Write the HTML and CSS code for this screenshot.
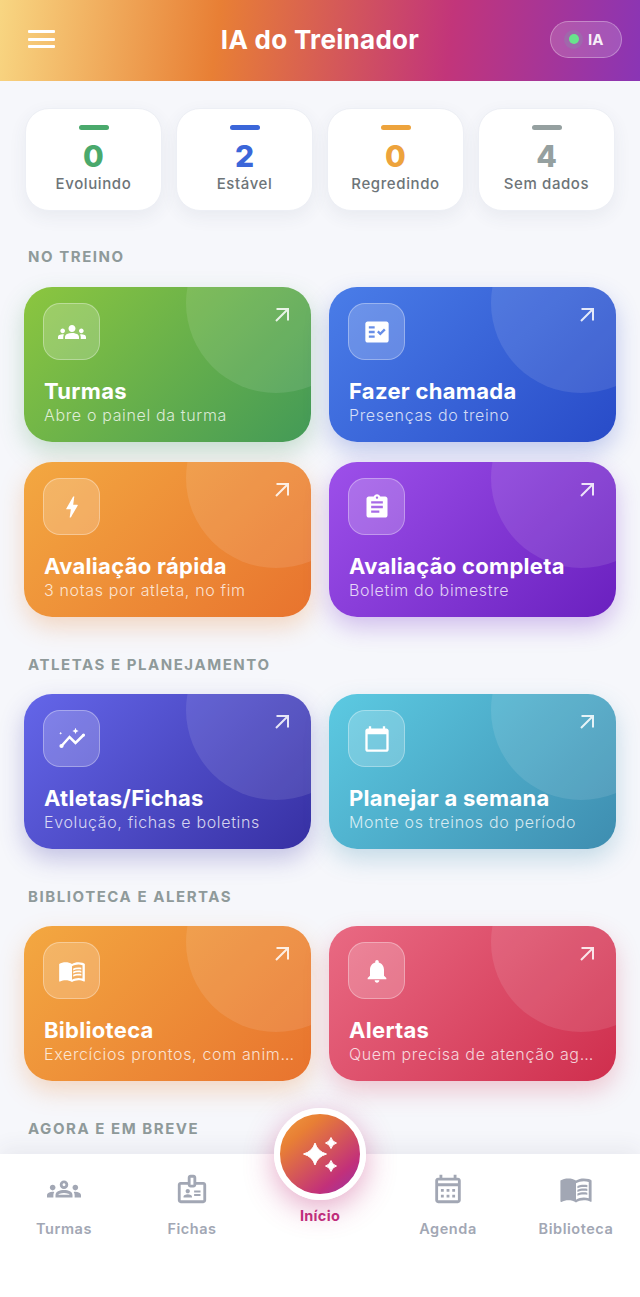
FILE: index.html
```html
<!DOCTYPE html>
<html lang="pt-BR">
<head>
<meta charset="utf-8">
<title>IA do Treinador</title>
<link rel="stylesheet" href="styles.css">
</head>
<body>
<div class="app">
  <header class="topbar">
    <button class="menu" aria-label="Menu"><span></span><span></span><span></span></button>
    <h1 class="brand">IA do Treinador</h1>
    <div class="pill"><span class="halo"><span class="dot"></span></span><span class="pill-text">IA</span></div>
  </header>

  <main class="content">
    <section class="stats">
      <div class="stat green"><i class="bar"></i><b class="num">0</b><span class="lbl">Evoluindo</span></div>
      <div class="stat blue"><i class="bar"></i><b class="num">2</b><span class="lbl">Estável</span></div>
      <div class="stat orange"><i class="bar"></i><b class="num">0</b><span class="lbl">Regredindo</span></div>
      <div class="stat gray"><i class="bar"></i><b class="num">4</b><span class="lbl">Sem dados</span></div>
    </section>

    <h2 class="section">NO TREINO</h2>
    <div class="grid">
      <a class="card c-green">
        <svg class="arrow" viewBox="0 0 16 16"><path d="M3 15 14.5 3.5M3.500 3H15V14.500"/></svg>
        <span class="ico"><svg viewBox="0 0 24 24"><path d="M12 12.750c1.630 0 3.070.390 4.240.900 1.080.480 1.760 1.560 1.760 2.730V18H6v-1.610c0-1.180.680-2.260 1.760-2.730 1.170-.520 2.610-.910 4.240-.910zM4 13c1.100 0 2-.900 2-2s-.900-2-2-2-2 .900-2 2 .900 2 2 2zm1.130 1.100c-.370-.060-.740-.100-1.130-.100-.990 0-1.930.210-2.780.580C.480 14.900 0 15.620 0 16.430V18h4.500v-1.610c0-.830.230-1.610.630-2.290zM20 13c1.100 0 2-.900 2-2s-.900-2-2-2-2 .900-2 2 .900 2 2 2zm4 3.430c0-.810-.480-1.530-1.220-1.850-.850-.370-1.790-.580-2.780-.580-.390 0-.760.040-1.130.100.400.680.630 1.460.630 2.290V18H24v-1.570zM12 6c1.660 0 3 1.340 3 3s-1.340 3-3 3-3-1.340-3-3 1.340-3 3-3z"/></svg></span>
        <strong class="title">Turmas</strong>
        <span class="sub">Abre o painel da turma</span>
      </a>
      <a class="card c-blue">
        <svg class="arrow" viewBox="0 0 16 16"><path d="M3 15 14.5 3.5M3.500 3H15V14.500"/></svg>
        <span class="ico"><svg viewBox="0 0 24 24"><path fill-rule="evenodd" d="M20 3H4c-1.100 0-2 .900-2 2v14c0 1.100.900 2 2 2h16c1.100 0 2-.900 2-2V5c0-1.100-.900-2-2-2zM10 17H5v-2h5v2zm0-4H5v-2h5v2zm0-4H5V7h5v2zm4.820 6L12 12.160l1.410-1.410 1.410 1.420L17.990 9l1.420 1.420L14.820 15z"/></svg></span>
        <strong class="title">Fazer chamada</strong>
        <span class="sub">Presenças do treino</span>
      </a>
      <a class="card c-orange">
        <svg class="arrow" viewBox="0 0 16 16"><path d="M3 15 14.5 3.5M3.500 3H15V14.500"/></svg>
        <span class="ico"><svg viewBox="0 0 24 24"><path d="M11 21h-1l1-7H7.500c-.580 0-.570-.320-.380-.660.190-.340.050-.080.070-.120C8.480 10.940 10.420 7.540 13 3h1l-1 7h3.500c.490 0 .560.330.470.510l-.070.150C12.960 17.550 11 21 11 21z"/></svg></span>
        <strong class="title">Avaliação rápida</strong>
        <span class="sub">3 notas por atleta, no fim</span>
      </a>
      <a class="card c-purple">
        <svg class="arrow" viewBox="0 0 16 16"><path d="M3 15 14.5 3.5M3.500 3H15V14.500"/></svg>
        <span class="ico"><svg viewBox="0 0 24 24"><path fill-rule="evenodd" d="M19 3h-4.180C14.400 1.840 13.300 1 12 1c-1.300 0-2.400.840-2.820 2H5c-1.100 0-2 .900-2 2v14c0 1.100.900 2 2 2h14c1.100 0 2-.900 2-2V5c0-1.100-.900-2-2-2zm-7 0c.550 0 1 .450 1 1s-.450 1-1 1-1-.450-1-1 .450-1 1-1zm2 14H7v-2h7v2zm3-4H7v-2h10v2zm0-4H7V7h10v2z"/></svg></span>
        <strong class="title">Avaliação completa</strong>
        <span class="sub">Boletim do bimestre</span>
      </a>
    </div>

    <h2 class="section">ATLETAS E PLANEJAMENTO</h2>
    <div class="grid">
      <a class="card c-indigo">
        <svg class="arrow" viewBox="0 0 16 16"><path d="M3 15 14.5 3.5M3.500 3H15V14.500"/></svg>
        <span class="ico"><svg viewBox="0 0 24 24"><path d="M15 2.400l.8 1.900 1.900.8-1.900.8-.8 1.900-.8-1.900-1.900-.8 1.900-.8zM2.300 5.800l.35.900.9.35-.9.35-.35.900-.35-.900-.9-.35.9-.35z"/><path class="ln" d="M3 18 9.900 10.300l5.100 5.100 6.900-6.800"/><circle cx="3" cy="18" r="1.800"/><circle cx="21.900" cy="8.600" r="1.300"/></svg></span>
        <strong class="title">Atletas/Fichas</strong>
        <span class="sub">Evolução, fichas e boletins</span>
      </a>
      <a class="card c-teal">
        <svg class="arrow" viewBox="0 0 16 16"><path d="M3 15 14.5 3.5M3.500 3H15V14.500"/></svg>
        <span class="ico"><svg viewBox="0 0 24 24"><path fill-rule="evenodd" d="M20 3h-1V1h-2v2H7V1H5v2H4c-1.100 0-2 .900-2 2v16c0 1.100.900 2 2 2h16c1.100 0 2-.900 2-2V5c0-1.100-.900-2-2-2zm0 18H4V8h16v13z"/></svg></span>
        <strong class="title">Planejar a semana</strong>
        <span class="sub">Monte os treinos do período</span>
      </a>
    </div>

    <h2 class="section">BIBLIOTECA E ALERTAS</h2>
    <div class="grid">
      <a class="card c-orange">
        <svg class="arrow" viewBox="0 0 16 16"><path d="M3 15 14.5 3.5M3.500 3H15V14.500"/></svg>
        <span class="ico"><svg viewBox="0 0 24 24"><path fill-rule="evenodd" d="M21 5c-1.110-.350-2.330-.500-3.500-.500-1.950 0-4.050.400-5.500 1.500-1.450-1.100-3.550-1.500-5.500-1.500S2.450 4.900 1 6v14.650c0 .250.250.500.500.500.100 0 .150-.050.250-.050C3.100 20.450 5.050 20 6.500 20c1.950 0 4.050.400 5.500 1.500 1.350-.850 3.800-1.500 5.500-1.500 1.650 0 3.350.300 4.750 1.050.100.050.150.050.250.050.250 0 .500-.250.500-.500V6c-.600-.450-1.250-.750-2-1zm0 13.500c-1.100-.350-2.300-.500-3.500-.500-1.700 0-4.150.650-5.500 1.500V8c1.350-.850 3.800-1.500 5.500-1.500 1.200 0 2.400.150 3.500.500v11.500z"/><path d="M17.500 10.500c.880 0 1.730.090 2.500.260V9.240c-.790-.150-1.640-.240-2.500-.240-1.700 0-3.240.290-4.500.830v1.660c1.130-.640 2.700-.990 4.500-.990zM13 12.490v1.660c1.130-.640 2.700-.990 4.500-.990.880 0 1.730.090 2.500.260V11.900c-.790-.150-1.640-.240-2.500-.240-1.700 0-3.240.300-4.500.830zM17.500 14.330c-1.700 0-3.240.290-4.500.830v1.660c1.130-.640 2.700-.990 4.500-.990.880 0 1.730.090 2.500.260v-1.520c-.790-.160-1.640-.240-2.500-.240z"/></svg></span>
        <strong class="title">Biblioteca</strong>
        <span class="sub">Exercícios prontos, com animações</span>
      </a>
      <a class="card c-red">
        <svg class="arrow" viewBox="0 0 16 16"><path d="M3 15 14.5 3.5M3.500 3H15V14.500"/></svg>
        <span class="ico"><svg viewBox="0 0 24 24"><path d="M12 22c1.100 0 2-.900 2-2h-4c0 1.100.890 2 2 2zm6-6v-5c0-3.070-1.640-5.640-4.500-6.320V4c0-.830-.670-1.500-1.500-1.500s-1.500.670-1.500 1.500v.680C7.630 5.360 6 7.920 6 11v5l-2 2v1h16v-1l-2-2z"/></svg></span>
        <strong class="title">Alertas</strong>
        <span class="sub">Quem precisa de atenção agora</span>
      </a>
    </div>

    <h2 class="section">AGORA E EM BREVE</h2>
  </main>

  <nav class="tabbar">
    <a class="tab"><svg viewBox="0 0 24 24"><path fill-rule="evenodd" d="M4 13c1.100 0 2-.900 2-2s-.900-2-2-2-2 .900-2 2 .900 2 2 2zm1.130 1.100c-.370-.060-.740-.100-1.130-.100-.990 0-1.930.210-2.780.580C.480 14.900 0 15.620 0 16.430V18h4.500v-1.610c0-.830.230-1.610.630-2.290zM20 13c1.100 0 2-.900 2-2s-.900-2-2-2-2 .900-2 2 .900 2 2 2zm4 3.430c0-.810-.480-1.530-1.220-1.850-.850-.370-1.790-.580-2.780-.580-.390 0-.760.040-1.130.100.400.680.630 1.460.630 2.290V18H24v-1.570zm-7.760-2.780c-1.170-.520-2.610-.900-4.240-.900-1.630 0-3.070.390-4.240.900C6.680 14.130 6 15.210 6 16.390V18h12v-1.610c0-1.180-.680-2.260-1.760-2.740zM8.070 16c.090-.230.130-.390.910-.690.970-.380 1.990-.560 3.020-.560s2.050.180 3.020.560c.770.300.810.460.910.690H8.070zM12 8c.550 0 1 .450 1 1s-.450 1-1 1-1-.450-1-1 .450-1 1-1m0-2c-1.660 0-3 1.340-3 3s1.340 3 3 3 3-1.340 3-3-1.340-3-3-3z"/></svg><span>Turmas</span></a>
    <a class="tab"><svg viewBox="0 0 24 24"><path fill-rule="evenodd" d="M20 7h-5V4c0-1.100-.900-2-2-2h-2C9.900 2 9 2.900 9 4v3H4C2.900 7 2 7.900 2 9v11c0 1.100.900 2 2 2h16c1.100 0 2-.900 2-2V9C22 7.900 21.100 7 20 7zM11 4h2v5h-2V4zM20 20H4V9h5c0 1.100.900 2 2 2h2c1.100 0 2-.900 2-2h5V20z"/><path d="M9 15c.830 0 1.500-.670 1.500-1.500S9.830 12 9 12s-1.500.670-1.500 1.500S8.170 15 9 15zM11.080 16.180C10.440 15.900 9.740 15.750 9 15.750s-1.440.150-2.080.430C6.360 16.420 6 16.960 6 17.570V18h6v-.430c0-.610-.360-1.150-.920-1.390zM13.500 13H18v1.500h-4.500zM13.500 15.500H18V17h-4.500z"/></svg><span>Fichas</span></a>
    <a class="tab home">
      <span class="fab"><svg viewBox="0 0 80 80"><path d="M35 29Q37.500 37.500 46.500 40 37.500 42.500 35 51 32.500 42.500 23.500 40 32.500 37.500 35 29ZM51 23.500Q52.200 27.800 56.500 29 52.200 30.200 51 34.500 49.800 30.200 45.500 29 49.800 27.800 51 23.500ZM51 46.500Q52.200 50.800 56.500 52 52.200 53.200 51 57.500 49.800 53.200 45.500 52 49.800 50.800 51 46.500Z"/></svg></span>
      <span>Início</span>
    </a>
    <a class="tab"><svg viewBox="0 0 24 24"><path fill-rule="evenodd" d="M19 4h-1V2h-2v2H8V2H6v2H5c-1.100 0-2 .900-2 2v14c0 1.100.900 2 2 2h14c1.100 0 2-.900 2-2V6c0-1.100-.900-2-2-2zm0 16H5V10h14v10zm0-12H5V6h14v2zM9 14H7v-2h2v2zm4 0h-2v-2h2v2zm4 0h-2v-2h2v2zm-8 4H7v-2h2v2zm4 0h-2v-2h2v2zm4 0h-2v-2h2v2z"/></svg><span>Agenda</span></a>
    <a class="tab"><svg viewBox="0 0 24 24"><path fill-rule="evenodd" d="M21 5c-1.110-.350-2.330-.500-3.500-.500-1.950 0-4.050.400-5.500 1.500-1.450-1.100-3.550-1.500-5.500-1.500S2.450 4.900 1 6v14.650c0 .250.250.500.500.500.100 0 .150-.050.250-.050C3.100 20.450 5.050 20 6.500 20c1.950 0 4.050.400 5.500 1.500 1.350-.850 3.800-1.500 5.500-1.500 1.650 0 3.350.300 4.750 1.050.100.050.150.050.250.050.250 0 .500-.250.500-.500V6c-.600-.450-1.250-.750-2-1zm0 13.500c-1.100-.350-2.300-.500-3.500-.500-1.700 0-4.150.650-5.500 1.500V8c1.350-.850 3.800-1.500 5.500-1.500 1.200 0 2.400.150 3.500.500v11.500z"/><path d="M17.500 10.500c.880 0 1.730.090 2.500.260V9.240c-.790-.150-1.640-.240-2.500-.240-1.700 0-3.240.290-4.500.830v1.660c1.130-.640 2.700-.990 4.500-.990zM13 12.490v1.660c1.130-.640 2.700-.990 4.500-.990.880 0 1.730.090 2.500.260V11.900c-.790-.150-1.640-.240-2.500-.240-1.700 0-3.240.300-4.500.830zM17.500 14.330c-1.700 0-3.240.290-4.500.830v1.660c1.130-.640 2.700-.990 4.500-.990.880 0 1.730.090 2.500.260v-1.520c-.790-.160-1.640-.240-2.500-.240z"/></svg><span>Biblioteca</span></a>
  </nav>
</div>
</body>
</html>
```

FILE: styles.css
```css
* { box-sizing: border-box; }
html, body { margin: 0; padding: 0; height: 100%; }
body { font-family: Inter, "Noto Sans", "Liberation Sans", sans-serif; background: #f6f7fb; overflow: hidden; }

.app { height: 1297px; display: flex; flex-direction: column; overflow: hidden; position: relative; }

.topbar {
  height: 81px; flex: none; position: relative;
  display: flex; align-items: center; justify-content: space-between;
  padding: 0 18px 3px 28px;
  background: linear-gradient(97deg, #f8d682 0%, #e87f35 34%, #c2357a 70%, #8a35b5 100%);
}
.menu { width: 27px; height: 18px; padding: 0; border: 0; background: none; display: flex; flex-direction: column; justify-content: space-between; }
.menu span { display: block; height: 3px; background: #fff; border-radius: 1px; }
.brand { position: absolute; left: 0; right: 0; top: 25px; margin: 0; text-align: center; color: #fff; font-size: 26px; line-height: 30px; font-weight: 700; letter-spacing: .3px; }
.pill { width: 72px; height: 37px; border-radius: 19px; display: flex; align-items: center; gap: 5px; padding-left: 13px; background: rgba(255,255,255,.16); border: 1.500px solid rgba(255,255,255,.3); }
.halo { width: 19px; height: 19px; border-radius: 50%; background: rgba(140,130,170,.4); display: flex; align-items: center; justify-content: center; }
.dot { width: 10px; height: 10px; border-radius: 50%; background: #68e58c; }
.pill-text { color: rgba(255,255,255,.92); font-size: 15px; font-weight: 700; }

.content { flex: 1; min-height: 0; padding: 27px 24px 0; overflow: hidden; }

.stats { display: grid; grid-template-columns: repeat(4, 1fr); gap: 14px; margin: 0 1px; }
.stat {
  height: 103px; background: #fff; border: 1px solid #edeff5; border-radius: 24px;
  display: flex; flex-direction: column; align-items: center; padding-top: 16px;
  box-shadow: 0 6px 18px rgba(60,70,100,.07);
}
.bar { display: block; width: 30px; height: 5px; border-radius: 3px; background: currentColor; }
.num { font-size: 30px; line-height: 36px; font-weight: 800; margin-top: 8px; }
.lbl { font-size: 15px; line-height: 20px; font-weight: 500; letter-spacing: .6px; color: #6d7478; margin-top: 0; }
.green { color: #4aa96c; }
.blue { color: #3b66d9; }
.orange { color: #eda33c; }
.gray { color: #95a0a0; }

.section { margin: 35px 0 19px; padding-left: 4px; font-size: 15px; line-height: 22px; font-weight: 700; letter-spacing: 1.550px; color: #8f9a9a; }
.grid + .section { margin-top: 37px; margin-bottom: 18px; }

.grid { display: grid; grid-template-columns: 287px 287px; column-gap: 18px; row-gap: 20px; }

.card {
  position: relative; height: 155px; border-radius: 28px; overflow: hidden;
  display: flex; flex-direction: column; padding: 16px 16px 17px 19px; color: #fff;
}
.card::before {
  content: ""; position: absolute; width: 180px; height: 180px; right: -55px; top: -74px;
  border-radius: 50%; background: rgba(255,255,255,.1);
}
.c-green { background: linear-gradient(135deg, #8cc63f, #439a57); box-shadow: 0 10px 24px rgba(70,150,90,.28); }
.c-blue { background: linear-gradient(135deg, #4a7de8, #284bc8); box-shadow: 0 10px 24px rgba(50,80,200,.28); }
.c-orange { background: linear-gradient(135deg, #f3a841, #e8732e); box-shadow: 0 10px 24px rgba(235,130,50,.28); }
.c-purple { background: linear-gradient(135deg, #9d50ea, #6a20bf); box-shadow: 0 10px 24px rgba(110,40,200,.28); }
.c-indigo { background: linear-gradient(135deg, #6466e9, #3730a3); box-shadow: 0 10px 24px rgba(60,55,170,.28); }
.c-teal { background: linear-gradient(135deg, #5ccae2, #3e8db0); box-shadow: 0 10px 24px rgba(65,145,180,.28); }
.c-red { background: linear-gradient(135deg, #e96a83, #cf2e4d); box-shadow: 0 10px 24px rgba(210,50,85,.25); }

.arrow { position: absolute; top: 19px; right: 22px; width: 16px; height: 16px; fill: none; stroke: rgba(255,255,255,.85); stroke-width: 2; }

.ico {
  width: 57px; height: 57px; flex: none; position: relative; border-radius: 17px;
  background: rgba(255,255,255,.2); border: 1px solid rgba(255,255,255,.32);
  display: flex; align-items: center; justify-content: center;
}
.ico svg { width: 28px; height: 28px; fill: #fff; }
.ico .ln { fill: none; stroke: #fff; stroke-width: 2.200; }

.title { position: relative; margin: auto 0 0 1px; font-size: 22px; line-height: 28px; font-weight: 700; letter-spacing: .3px; white-space: nowrap; }
.sub { position: relative; margin-left: 1px; font-size: 16px; line-height: 20px; font-weight: 300; letter-spacing: .65px; color: rgba(255,255,255,.78); white-space: nowrap; overflow: hidden; text-overflow: ellipsis; }

.tabbar {
  height: 143px; flex: none; position: relative; background: #fff;
  display: grid; grid-template-columns: repeat(5, 1fr);
  box-shadow: 0 -6px 20px rgba(50,55,80,.07);
}
.tab { display: flex; flex-direction: column; align-items: center; padding-top: 18px; color: #a2a7b4; font-size: 14.500px; line-height: 20px; font-weight: 600; letter-spacing: .55px; }
.tab svg { width: 34px; height: 34px; fill: #a2a7b4; margin-bottom: 13px; }
.home { color: #bf2e7c; font-weight: 700; position: relative; padding-top: 52px; letter-spacing: .3px; }
.fab {
  position: absolute; left: 18px; top: -46px; width: 92px; height: 92px; border-radius: 50%;
  border: 6px solid #fff; background: linear-gradient(140deg, #f2a440 0%, #e87f35 28%, #c2307a 72%, #8a35b5 100%);
  background-origin: border-box;
  box-shadow: 0 8px 30px rgba(194,48,122,.42);
}
.tab .fab svg { width: 80px; height: 80px; fill: #fff; stroke: #fff; stroke-width: 1; stroke-linejoin: round; margin: 0; display: block; }
```
